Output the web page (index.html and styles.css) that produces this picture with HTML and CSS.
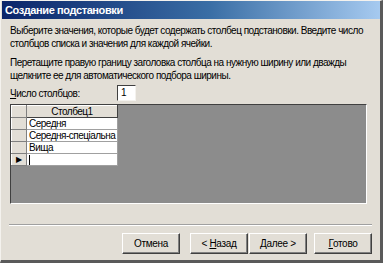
FILE: index.html
```html
<!DOCTYPE html>
<html lang="ru">
<head>
    <meta charset="UTF-8">
    <title>Создание подстановки</title>
    <link rel="stylesheet" href="styles.css">
</head>
<body>
    <div class="window">
        <div class="titlebar">Создание подстановки</div>
        <div class="content">
            <p class="text">Выберите значения, которые будет содержать столбец подстановки. Введите число<br>столбцов списка и значения для каждой ячейки.</p>
            <p class="text last">Перетащите правую границу заголовка столбца на нужную ширину или дважды<br>щелкните ее для автоматического подбора ширины.</p>
            <div class="cols-row">
                <span class="label"><u>Ч</u>исло столбцов:</span>
                <span class="num-box">1</span>
            </div>
            <div class="grid">
                <table class="sheet">
                    <colgroup><col class="col-sel"><col class="col-data"></colgroup>
                    <tr><td class="sel"></td><td class="head">Столбец1</td></tr>
                    <tr><td class="sel"></td><td class="cell">Середня</td></tr>
                    <tr><td class="sel"></td><td class="cell">Середня-спеціальна</td></tr>
                    <tr><td class="sel"></td><td class="cell">Вища</td></tr>
                    <tr><td class="sel">&#9654;</td><td class="cell"><span class="caret"></span></td></tr>
                </table>
            </div>
        </div>
        <div class="separator"></div>
        <div class="buttons">
            <button class="btn">Отмена</button>
            <button class="btn gap-big">&lt; <u>Н</u>азад</button>
            <button class="btn gap-none"><u>Д</u>алее &gt;</button>
            <button class="btn gap-mid"><u>Г</u>отово</button>
        </div>
    </div>
</body>
</html>
```

FILE: styles.css
```css
body {
    margin: 0;
    background: #e2ded6;
    font-family: "Liberation Sans", Arial, sans-serif;
    font-size: 10px;
    letter-spacing: -0.5px;
    color: #000;
}
.window {
    width: 383px;
    height: 263px;
    box-sizing: border-box;
    overflow: hidden;
    background: #e2ded6;
    border-top: 1px solid #f4f2ee;
    border-left: 1px solid #f4f2ee;
    border-right: 3px solid #5a5a5a;
    border-bottom: 3px solid #5a5a5a;
    display: flex;
    flex-direction: column;
}
.titlebar {
    flex: none;
    height: 18px;
    margin-left: 1px;
    padding-left: 3px;
    background: linear-gradient(to right, #0a246a, #3a6ea5 55%, #a6caf0);
    color: #fff;
    font-weight: bold;
    font-size: 11px;
    letter-spacing: -0.4px;
    line-height: 18px;
}
.content {
    padding: 5px 13px 0 9px;
}
.text {
    margin: 0 0 6px 0;
    line-height: 13px;
    white-space: nowrap;
}
.text.last {
    margin-bottom: 2px;
}
.cols-row {
    display: flex;
    align-items: center;
    height: 18px;
}
.label {
    width: 107px;
}
.num-box {
    width: 14px;
    height: 14px;
    padding-left: 3px;
    line-height: 14px;
    background: #fff;
    border-top: 1px solid #404040;
    border-left: 1px solid #404040;
    border-right: 1px solid #f4f2ee;
    border-bottom: 1px solid #f4f2ee;
}
.grid {
    margin-top: 2px;
    height: 98px;
    background: #8c8c8c;
    border-top: 1px solid #404040;
    border-left: 1px solid #404040;
    border-right: 1px solid #fff;
    border-bottom: 1px solid #fff;
}
.sheet {
    border-collapse: collapse;
    table-layout: fixed;
    width: 106px;
}
.col-sel {
    width: 15px;
}
.col-data {
    width: 91px;
}
.sheet td {
    height: 11px;
    padding: 0 2px;
    line-height: 11px;
    white-space: nowrap;
    overflow: hidden;
}
.sel {
    background: #e2ded6;
    border: 1px solid #808080;
    border-top-color: #fff;
    border-left-color: #fff;
    font-size: 8px;
    text-align: center;
}
.head {
    background: #e2ded6;
    border: 1px solid #404040;
    border-top-color: #fff;
    border-left-color: #fff;
    text-align: center;
}
.cell {
    background: #fff;
    border: 1px solid #a0a0a0;
}
.caret {
    display: inline-block;
    width: 1px;
    height: 10px;
    background: #000;
    vertical-align: middle;
}
.separator {
    flex: none;
    margin: 20px 8px 0 8px;
    border-top: 1px solid #a0a0a0;
    border-bottom: 1px solid #fff;
}
.buttons {
    flex: none;
    display: flex;
    padding: 7px 0 0 121px;
}
.btn {
    width: 58px;
    height: 21px;
    padding: 0;
    font-family: "Liberation Sans", Arial, sans-serif;
    font-size: 10px;
    letter-spacing: -0.3px;
    color: #000;
    background: #e2ded6;
    border: 1px solid #fff;
    border-right-color: #404040;
    border-bottom-color: #404040;
    box-shadow: inset -1px -1px 0 #808080;
}
.gap-big {
    margin-left: 10px;
}
.gap-none {
    margin-left: 1px;
}
.gap-mid {
    margin-left: 7px;
}
```
